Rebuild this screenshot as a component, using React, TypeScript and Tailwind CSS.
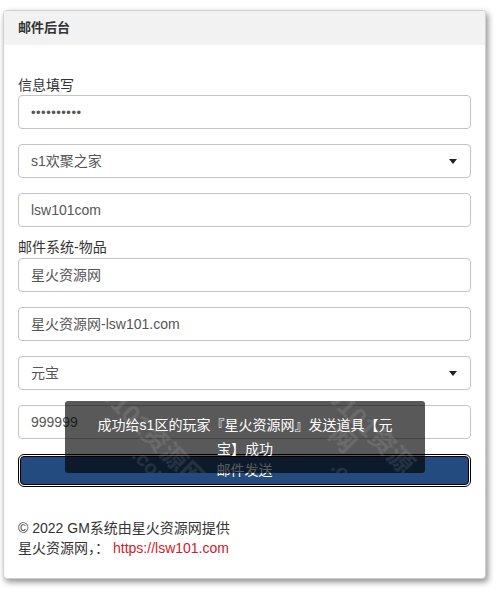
const font = { fontFamily: '"Liberation Sans", Arial, "Noto Sans CJK SC", sans-serif' };

const Field = ({ children, select }: { children: React.ReactNode; select?: boolean }) => (
  <div className="flex h-[34px] items-center justify-between rounded-[4px] border border-[#c4c4c4] bg-white pl-[12px] pr-[13px] text-[14px] text-[#555]">
    <span>{children}</span>
    {select && <span className="h-0 w-0 border-x-[4px] border-t-[5px] border-x-transparent border-t-[#222]" />}
  </div>
);

const Mark = ({ className }: { className: string }) => (
  <div className={`pointer-events-none absolute rotate-45 text-[26px] font-bold leading-none text-white/10 ${className}`}>
    <div>lsw101资源网</div>
    <div className="pl-[70px] text-[20px]">.com</div>
  </div>
);

export default function App() {
  return (
    <div className="min-h-[599px] bg-white pt-[10px] pl-[3px]" style={font}>
      <div className="w-[483px] overflow-hidden rounded-[4px] border border-[#d0d0d0] bg-white shadow-[2px_3px_6px_rgba(0,0,0,0.45)]">
        <div className="flex h-[34px] items-center bg-[#f2f2f2] px-[14px] text-[13px] font-bold text-[#333]">邮件后台</div>
        <div className="relative px-[14px] pb-[20px] pt-[30px] text-[14px] text-[#333]">
          <div className="h-[20px] leading-[20px]">信息填写</div>
          <div className="flex flex-col gap-[15px]">
            <Field><span className="text-[13px] tracking-[0.5px]">••••••••••</span></Field>
            <Field select>s1欢聚之家</Field>
            <Field>lsw101com</Field>
          </div>
          <div className="mt-[10px] h-[21px] leading-[20px]">邮件系统-物品</div>
          <div className="flex flex-col gap-[15px]">
            <Field>星火资源网</Field>
            <Field>星火资源网-lsw101.com</Field>
            <Field select>元宝</Field>
            <Field>999999</Field>
            <button className="mx-[2px] mt-[2px] h-[29px] rounded-[4px] border border-black bg-[#234b7f] text-[14px] text-white outline outline-1 outline-offset-1 outline-black">
              邮件发送
            </button>
          </div>
          <div className="mt-[33px] leading-[20px] text-[#333]">
            <div>© 2022 GM系统由星火资源网提供</div>
            <div>
              星火资源网，：<span className="ml-[4px] text-[#d0202a]">https://lsw101.com</span>
            </div>
          </div>

          <div className="absolute left-[61px] top-[356px] flex h-[72px] w-[360px] items-center justify-center overflow-hidden rounded-[3px] bg-black/65 px-[30px] text-center text-[14px] leading-[24px] text-white">
            <Mark className="left-[-10px] top-[10px]" />
            <Mark className="left-[200px] top-[0px]" />
            <span className="relative">成功给s1区的玩家『星火资源网』发送道具【元宝】成功</span>
          </div>
        </div>
      </div>
    </div>
  );
}
